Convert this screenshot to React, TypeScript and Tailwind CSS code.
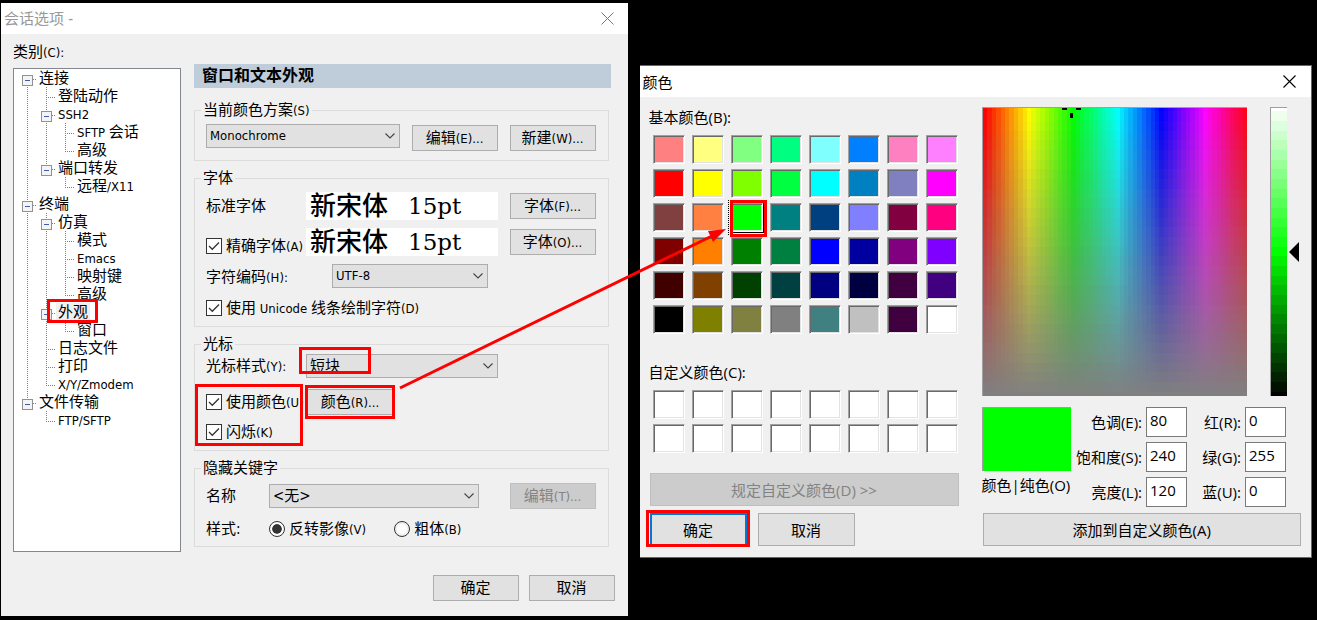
import React, { useId } from "react";
import type { ReactNode } from "react";

/* ---------- shared text helper: Latin runs are set smaller than the Chinese ---------- */

function Mixed({ children }: { children: string }) {
  const parts = children.split(/([\x20-\x7e]+)/).filter(Boolean);
  return (
    <>
      {parts.map((part, i) =>
        /^[\x20-\x7e]/.test(part) ? (
          <span key={i} className="text-[13px]">
            {part}
          </span>
        ) : (
          part
        )
      )}
    </>
  );
}

function Marker({ className }: { className: string }) {
  return <span aria-hidden="true" className={`pointer-events-none absolute z-10 border-3 border-[#ff0000] ${className}`} />;
}

/* ---------- form controls ---------- */

function PushButton({ children, disabled, className = "w-[86px]" }: { children: string; disabled?: boolean; className?: string }) {
  return (
    <button
      type="button"
      disabled={disabled}
      className={`h-[26px] shrink-0 whitespace-nowrap border border-[#adadad] bg-[#e1e1e1] leading-5 disabled:border-[#bfbfbf] disabled:bg-[#cccccc] disabled:text-[#838383] ${className}`}
    >
      <Mixed>{children}</Mixed>
    </button>
  );
}

function Dropdown({ label, value, className, textClass = "text-[13px]" }: { label: string; value: string; className: string; textClass?: string }) {
  return (
    <div className={`relative h-6 ${className}`}>
      <select
        aria-label={label}
        defaultValue={value}
        className={`block h-full w-full appearance-none border border-[#adadad] bg-[#e1e1e1] pl-[3px] pr-6 ${textClass}`}
      >
        <option>{value}</option>
      </select>
      <svg viewBox="0 0 10 6" className="pointer-events-none absolute right-[5px] top-[9px] h-[6px] w-[10px]" fill="none" stroke="#444" strokeWidth="1.1">
        <path d="M0.5 0.5 5 5 9.5 0.5" />
      </svg>
    </div>
  );
}

function CheckBox({ children, className = "h-5" }: { children: string; className?: string }) {
  return (
    <label className={`flex items-center gap-1 whitespace-nowrap leading-5 ${className}`}>
      <span className="relative h-4 w-4 shrink-0">
        <input type="checkbox" defaultChecked className="peer block h-4 w-4 appearance-none border border-[#333] bg-white" />
        <svg viewBox="0 0 16 16" className="pointer-events-none absolute inset-0 hidden h-4 w-4 peer-checked:block" fill="none" stroke="#333" strokeWidth="1.3">
          <path d="M3 8 6.3 11.3 13 4.5" />
        </svg>
      </span>
      <span>
        <Mixed>{children}</Mixed>
      </span>
    </label>
  );
}

function Radio({ children, checked }: { children: string; checked?: boolean }) {
  return (
    <label className="flex h-5 items-center gap-1 whitespace-nowrap leading-5">
      <input
        type="radio"
        name="keyword-style"
        defaultChecked={checked}
        className="h-4 w-4 shrink-0 appearance-none rounded-full border border-[#333] bg-white bg-clip-content p-0.5 checked:bg-[#333] checked:shadow-[inset_0_0_0_2px_white]"
      />
      <span>
        <Mixed>{children}</Mixed>
      </span>
    </label>
  );
}

function Group({ title, children, className = "" }: { title: string; children: ReactNode; className?: string }) {
  return (
    <fieldset className={`mr-0.5 min-w-0 border border-[#dcdcdc] pl-[11px] pr-3 ${className}`}>
      <legend className="-ml-[5px] h-5 px-0.5 leading-5">
        <Mixed>{title}</Mixed>
      </legend>
      {children}
    </fieldset>
  );
}

/* ---------- category tree ---------- */

type Node = { name: string; children?: Node[]; selected?: boolean };

const tree: Node[] = [
  {
    name: "连接",
    children: [
      { name: "登陆动作" },
      { name: "SSH2", children: [{ name: "SFTP 会话" }, { name: "高级" }] },
      { name: "端口转发", children: [{ name: "远程/X11" }] },
    ],
  },
  {
    name: "终端",
    children: [
      { name: "仿真", children: [{ name: "模式" }, { name: "Emacs" }, { name: "映射键" }, { name: "高级" }] },
      { name: "外观", selected: true, children: [{ name: "窗口" }] },
      { name: "日志文件" },
      { name: "打印" },
      { name: "X/Y/Zmodem" },
    ],
  },
  { name: "文件传输", children: [{ name: "FTP/SFTP" }] },
];

function TreeCell({ up, down, across, box }: { up?: boolean; down?: boolean; across?: boolean; box?: boolean }) {
  return (
    <svg viewBox="0 0 19 18" className="h-[18px] w-[19px] shrink-0" fill="none" stroke="#808080" shapeRendering="crispEdges">
      {up && <path d="M9.5 0V9" strokeDasharray="1 1" />}
      {down && <path d="M9.5 10V18" strokeDasharray="1 1" />}
      {across && <path d="M9 10.5H19" strokeDasharray="1 1" />}
      {box && (
        <>
          <rect x="4.5" y="6.5" width="10" height="10" fill="#f4f4f4" stroke="#919191" />
          <path d="M7 11.5H12" stroke="#3b5fae" />
        </>
      )}
    </svg>
  );
}

function TreeRows({ nodes, trail }: { nodes: Node[]; trail: boolean[] }) {
  return (
    <ul>
      {nodes.map((node, i) => {
        const last = i === nodes.length - 1;
        const root = trail.length === 0;
        return (
          <li key={node.name}>
            <div className="relative flex h-[18px] items-center whitespace-nowrap leading-[18px]">
              {trail.map((goesOn, k) => (
                <TreeCell key={k} up={goesOn} down={goesOn} />
              ))}
              <TreeCell up={!(root && i === 0)} down={!last} across box={!!node.children} />
              <span className={node.selected ? "relative bg-[#f0f0f0] px-0.5" : "px-0.5"}>
                <Mixed>{node.name}</Mixed>
                {node.selected && <Marker className="-left-[9px] -top-1 h-6 w-[51px]" />}
              </span>
            </div>
            {node.children && <TreeRows nodes={node.children} trail={[...trail, !last]} />}
          </li>
        );
      })}
    </ul>
  );
}

/* ---------- session options window ---------- */

function FontSample() {
  return (
    <div className="flex h-7 min-w-0 flex-1 items-center gap-5 bg-white pb-px pl-1 leading-7">
      <span className="text-[26px] font-medium">新宋体</span>
      <span className="font-['DejaVu_Serif',serif] text-[23px]">15pt</span>
    </div>
  );
}

function SessionOptions() {
  return (
    <section className="min-w-0 flex-[627_1_0%] bg-[#f0f0f0] font-['DejaVu_Sans_Condensed','Noto_Sans_CJK_SC',sans-serif] text-[15px] leading-5 text-black">
      <header className="flex h-[31px] items-center justify-between bg-white pl-[3px] pr-[14px] text-[#999]">
        <h1>会话选项 -</h1>
        <button type="button" aria-label="关闭">
          <svg viewBox="0 0 13 13" className="h-[13px] w-[13px]" stroke="#777" strokeWidth="1">
            <path d="M0.5 0.5 12.5 12.5M12.5 0.5 0.5 12.5" />
          </svg>
        </button>
      </header>

      <div className="flex gap-[13px] pl-3 pr-[17px] pt-2">
        <div className="flex w-[168px] shrink-0 flex-col">
          <h2 className="h-5 leading-5">
            <Mixed>类别(C):</Mixed>
          </h2>
          <nav aria-label="类别" className="mt-[6px] flex-1 border border-[#828790] bg-white pl-1">
            <TreeRows nodes={tree} trail={[]} />
          </nav>
        </div>

        <div className="min-w-0 flex-1 pb-[5px] pt-[22px]">
          <h2 className="h-6 bg-[#bfcddb] pl-2 text-base leading-6 font-bold">窗口和文本外观</h2>

          <Group title="当前颜色方案(S)" className="mt-3 pb-[9px]">
            <div className="flex items-start gap-3 pt-1">
              <Dropdown label="当前颜色方案" value="Monochrome" className="flex-1" />
              <div className="flex gap-3 pt-px">
                <PushButton>编辑(E)...</PushButton>
                <PushButton>新建(W)...</PushButton>
              </div>
            </div>
          </Group>

          <Group title="字体" className="mt-[7px] pb-[8px]">
            <div className="flex items-center pt-1">
              <span className="w-[100px] shrink-0">标准字体</span>
              <FontSample />
              <PushButton className="ml-3 w-[86px]">字体(F)...</PushButton>
            </div>
            <div className="mt-2 flex items-center">
              <CheckBox className="h-7 w-[100px] shrink-0 pt-2">精确字体(A)</CheckBox>
              <FontSample />
              <PushButton className="ml-3 w-[86px]">字体(O)...</PushButton>
            </div>
            <div className="mt-2 flex items-end">
              <span className="w-[126px] shrink-0">
                <Mixed>字符编码(H):</Mixed>
              </span>
              <Dropdown label="字符编码" value="UTF-8" className="w-[156px]" />
            </div>
            <CheckBox className="mt-[10px] h-5">使用 Unicode 线条绘制字符(D)</CheckBox>
          </Group>

          <Group title="光标" className="mt-[7px] pb-2">
            <div className="flex items-center">
              <span className="w-[100px] shrink-0">
                <Mixed>光标样式(Y):</Mixed>
              </span>
              <div className="relative mr-[98px] flex-1">
                <Dropdown label="光标样式" value="短块" className="w-full" textClass="text-[15px]" />
                <Marker className="-left-[7px] -top-[7px] h-[27px] w-[72px]" />
              </div>
            </div>
            <div className="mt-[11px] flex items-start gap-[7px]">
              <div className="relative flex w-[94px] flex-col gap-[10px] pt-[3px]">
                <CheckBox>使用颜色(U)</CheckBox>
                <CheckBox>闪烁(K)</CheckBox>
                <Marker className="-left-[11px] -top-[5px] h-[62px] w-[108px]" />
              </div>
              <div className="relative">
                <PushButton>颜色(R)...</PushButton>
                <Marker className="-left-0.5 -top-1 h-[34px] w-[90px]" />
              </div>
            </div>
          </Group>

          <Group title="隐藏关键字" className="mt-[7px] pb-[7px]">
            <div className="flex items-center pt-[5px]">
              <span className="w-[63px] shrink-0">名称</span>
              <Dropdown label="名称" value="<无>" className="mr-[31px] flex-1" textClass="text-[15px]" />
              <PushButton disabled>编辑(T)...</PushButton>
            </div>
            <div className="mt-[10px] flex items-center">
              <span className="w-[63px] shrink-0">样式:</span>
              <div className="flex gap-7">
                <Radio checked>反转影像(V)</Radio>
                <Radio>粗体(B)</Radio>
              </div>
            </div>
          </Group>
        </div>
      </div>

      <footer className="flex justify-end gap-[10px] pb-[15px] pr-[13px] pt-[23px]">
        <PushButton>确定</PushButton>
        <PushButton>取消</PushButton>
      </footer>
    </section>
  );
}

/* ---------- colour window ---------- */

const basicColors = [
  "#ff8080", "#ffff80", "#80ff80", "#00ff80", "#80ffff", "#0080ff", "#ff80c0", "#ff80ff",
  "#ff0000", "#ffff00", "#80ff00", "#00ff40", "#00ffff", "#0080c0", "#8080c0", "#ff00ff",
  "#804040", "#ff8040", "#00ff00", "#008080", "#004080", "#8080ff", "#800040", "#ff0080",
  "#800000", "#ff8000", "#008000", "#008040", "#0000ff", "#0000a0", "#800080", "#8000ff",
  "#400000", "#804000", "#004000", "#004040", "#000080", "#000040", "#400040", "#400080",
  "#000000", "#808000", "#808040", "#808080", "#408080", "#c0c0c0", "#400040", "#ffffff",
];

function Swatch({ color, selected }: { color: string; selected?: boolean }) {
  return (
    <div className="relative">
      {selected && (
        <>
          <span className="absolute -left-[3px] -top-[3px] h-[35px] w-[37px] border-l border-dotted border-black" />
          <span className="absolute -inset-px border border-black" />
        </>
      )}
      <button
        type="button"
        aria-label={color}
        style={{ backgroundColor: color }}
        className="relative block h-[29px] w-8 border border-b-white border-l-[#a0a0a0] border-r-white border-t-[#a0a0a0] shadow-[inset_1px_1px_0_#696969,inset_-1px_-1px_0_#e3e3e3]"
      />
      {selected && <Marker className="-left-px -top-[3px] h-[37px] w-[37px]" />}
    </div>
  );
}

const bandTop = (k: number) => (k === 0 ? 0 : 3.4 + 9.67 * (k - 1));
const bands = Array.from({ length: 31 }, (_, k) => k);

function Spectrum() {
  return (
    <svg viewBox="0 0 264 288" preserveAspectRatio="none" className="h-[289px] min-w-0 flex-1 border-l border-t border-[#a0a0a0]" shapeRendering="crispEdges">
      {Array.from({ length: 60 }, (_, i) => (
        <rect key={i} x={i * 4.4} y="0" width="5" height="288" fill={`hsl(${i * 6} 100% 50%)`} />
      ))}
      {bands.slice(1).map((k) => (
        <rect key={k} x="0" y={bandTop(k)} width="264" height={bandTop(k + 1) - bandTop(k)} fill="#808080" fillOpacity={k / 30} />
      ))}
      <path d="M79 0h5v2h-5zM93 0h5v2h-5zM87 5h3v5h-3z" fill="#000" />
    </svg>
  );
}

function LuminanceBar() {
  return (
    <svg viewBox="0 0 16 288" className="h-[289px] w-[17px] shrink-0 border-l border-t border-[#a0a0a0]" shapeRendering="crispEdges">
      {bands.map((k) => (
        <rect key={k} x="0" y={bandTop(k)} width="16" height="10" fill={`hsl(120 100% ${100 - (k * 100) / 30}%)`} />
      ))}
    </svg>
  );
}

function NumberField({ label, value }: { label: string; value: string }) {
  const id = useId();
  return (
    <>
      <label htmlFor={id} className="whitespace-nowrap pr-1 text-right leading-[30px]">
        {label}
      </label>
      <input id={id} defaultValue={value} className="h-[30px] w-[41px] border border-[#7a7a7a] bg-white pb-1 pl-[3px]" />
    </>
  );
}

function ColorButton({ children, className, disabled }: { children: string; className: string; disabled?: boolean }) {
  return (
    <button
      type="button"
      disabled={disabled}
      className={`h-[33px] bg-[#e1e1e1] leading-5 disabled:bg-[#cccccc] disabled:text-[#838383] ${className}`}
    >
      {children}
    </button>
  );
}

function ColorDialog() {
  return (
    <section className="mt-[62px] min-w-0 flex-[672_1_0%] border border-l-0 border-[#1979ca] bg-[#f0f0f0] font-['Open_Sans','Noto_Sans_CJK_SC',sans-serif] text-[15px] leading-5 text-black">
      <header className="flex h-[31px] items-center justify-between bg-white pl-[3px] pr-[15px]">
        <h1>颜色</h1>
        <button type="button" aria-label="关闭">
          <svg viewBox="0 0 13 13" className="h-[13px] w-[13px]" stroke="#000" strokeWidth="1.1">
            <path d="M0.5 0.5 12.5 12.5M12.5 0.5 0.5 12.5" />
          </svg>
        </button>
      </header>

      <div className="flex gap-[23px] pb-[11px] pl-[9px] pr-[10px] pt-[10px]">
        <div className="w-[310px] shrink-0">
          <h2 className="h-5 leading-5">基本颜色(B):</h2>
          <div className="ml-1 mt-2 grid w-fit grid-cols-8 gap-x-[7px] gap-y-[5px]">
            {basicColors.map((c, i) => (
              <Swatch key={i} color={c} selected={i === 18} />
            ))}
          </div>
          <h2 className="mt-7 h-5 leading-5">自定义颜色(C):</h2>
          <div className="ml-1 mt-2 grid w-fit grid-cols-8 gap-x-[7px] gap-y-[5px]">
            {Array.from({ length: 16 }, (_, i) => (
              <Swatch key={i} color="#ffffff" />
            ))}
          </div>
          <ColorButton disabled className="ml-px mt-5 block w-[309px] border border-[#bfbfbf]">
            {"规定自定义颜色(D) >>"}
          </ColorButton>
          <div className="ml-px mt-[7px] flex gap-[11px]">
            <div className="relative">
              <ColorButton className="block w-[97px] border-2 border-[#0078d7]">确定</ColorButton>
              <Marker className="-left-1 -top-[3px] h-[37px] w-[104px]" />
            </div>
            <ColorButton className="w-[97px] border border-[#adadad]">取消</ColorButton>
          </div>
        </div>

        <div className="min-w-0 flex-1">
          <div className="flex items-center">
            <Spectrum />
            <div className="w-[23px] shrink-0" />
            <LuminanceBar />
            <svg viewBox="0 0 10 20" className="ml-0.5 mr-0.5 h-5 w-[10px] shrink-0">
              <path d="M0 10 10 0V20z" fill="#000" />
            </svg>
          </div>
          <div className="mt-[11px] flex justify-between pr-[15px]">
            <div className="w-[89px]">
              <div className="h-16 border-l border-t border-[#a0a0a0] bg-[#00ff00]" />
              <p className="mt-1 whitespace-nowrap leading-5">颜色|纯色(O)</p>
            </div>
            <div className="grid grid-cols-[auto_41px_58px_41px] gap-y-[5px]">
              <NumberField label="色调(E):" value="80" />
              <NumberField label="红(R):" value="0" />
              <NumberField label="饱和度(S):" value="240" />
              <NumberField label="绿(G):" value="255" />
              <NumberField label="亮度(L):" value="120" />
              <NumberField label="蓝(U):" value="0" />
            </div>
          </div>
          <ColorButton className="ml-px mt-[6px] block w-[calc(100%-1px)] border border-[#adadad]">添加到自定义颜色(A)</ColorButton>
        </div>
      </div>
    </section>
  );
}

export default function App() {
  return (
    <main className="relative flex min-h-screen min-w-[1317px] items-start gap-3 bg-black pl-px pr-[5px] pt-[3px]">
      <SessionOptions />
      <ColorDialog />
      <svg aria-hidden="true" viewBox="0 0 1317 620" className="pointer-events-none absolute left-0 top-0 z-20 h-[620px] w-[1317px]">
        <path d="M400 388 712 236" stroke="#ff0000" strokeWidth="3" />
        <path d="M726 229 708 231 713 242z" fill="#ff0000" />
      </svg>
    </main>
  );
}
